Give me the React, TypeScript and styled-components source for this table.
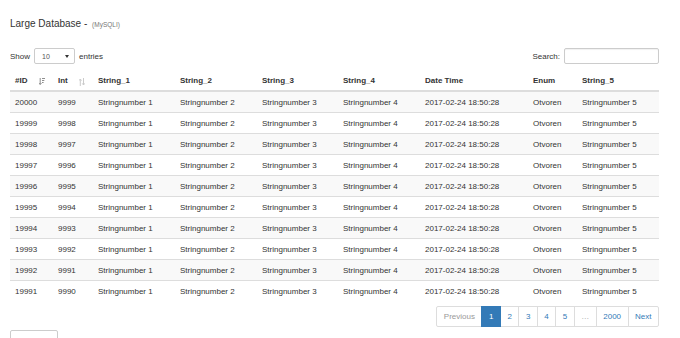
import styled, { createGlobalStyle } from "styled-components";

const GlobalStyle = createGlobalStyle`
  body {
    margin: 0;
    background: #fff;
    font-family: "Liberation Sans", Arial, sans-serif;
    font-size: 8px;
    color: #333;
  }
`;

const Page = styled.div`
  width: 649px;
  padding: 17px 0 0 10px;
  overflow: hidden;
  height: 321px;
`;

const Title = styled.h3`
  margin: 0;
  font-size: 10px;
  font-weight: normal;
  line-height: 14px;
  color: #333;
`;

const Sub = styled.small`
  font-size: 6.5px;
  color: #777;
  margin-left: 2px;
`;

const Controls = styled.div`
  display: flex;
  justify-content: space-between;
  align-items: center;
  margin-top: 16px;
  height: 16px;
`;

const Field = styled.label`
  display: flex;
  align-items: center;
  gap: 4px;
  color: #333;
`;

const SelectBox = styled.div`
  width: 41px;
  height: 16px;
  box-sizing: border-box;
  border: 1px solid #ccc;
  border-radius: 2px;
  display: flex;
  align-items: center;
  justify-content: space-between;
  padding: 0 5px 0 7px;
  font-size: 7px;
  color: #555;
`;

const Caret = styled.span`
  width: 0;
  height: 0;
  border-left: 2px solid transparent;
  border-right: 2px solid transparent;
  border-top: 3px solid #333;
`;

const SearchInput = styled.div`
  width: 95px;
  height: 16px;
  box-sizing: border-box;
  border: 1px solid #ccc;
  border-radius: 2px;
  box-shadow: inset 0 1px 1px rgba(0, 0, 0, 0.06);
`;

const Table = styled.table`
  width: 649px;
  table-layout: fixed;
  border-collapse: collapse;
  margin-top: 7px;
`;

const Th = styled.th`
  text-align: left;
  font-weight: bold;
  padding: 4px 5px;
  line-height: 11px;
  border-bottom: 2px solid #ddd;
  position: relative;
  white-space: nowrap;
`;

const Row = styled.tr<{ $striped: boolean }>`
  background: ${(p) => (p.$striped ? "#f9f9f9" : "#fff")};
`;

const Td = styled.td`
  padding: 5px 5px 4px;
  line-height: 11px;
  border-top: 1px solid #ddd;
  white-space: nowrap;
  color: #333;
`;

const SortIcon = styled.svg<{ $faded?: boolean }>`
  position: absolute;
  right: 8px;
  top: 7px;
  width: 6px;
  height: 8px;
  opacity: ${(p) => (p.$faded ? 0.25 : 0.55)};
`;

const Pager = styled.ul`
  list-style: none;
  margin: 5px 0 0;
  padding: 0;
  display: flex;
  justify-content: flex-end;
`;

const PageItem = styled.li<{ $active?: boolean; $disabled?: boolean }>`
  padding: 4px 6.5px;
  line-height: 11px;
  border: 1px solid ${(p) => (p.$active ? "#337ab7" : "#ddd")};
  margin-left: -1px;
  background: ${(p) => (p.$active ? "#337ab7" : "#fff")};
  color: ${(p) => (p.$active ? "#fff" : p.$disabled ? "#999" : "#337ab7")};
  position: relative;
  z-index: ${(p) => (p.$active ? 2 : 1)};

  &:first-child {
    border-radius: 2px 0 0 2px;
    margin-left: 0;
  }
  &:last-child {
    border-radius: 0 2px 2px 0;
  }
`;

const Button = styled.button`
  margin-top: 3px;
  width: 48px;
  height: 20px;
  border: 1px solid #ccc;
  border-radius: 2px;
  background: #fff;
  font-family: "Liberation Sans", Arial, sans-serif;
  font-size: 8px;
  color: #333;
  padding: 0;
`;

const widths = [43, 40, 82, 82, 81, 82, 108, 49, 82];
const headers = [
  "#ID",
  "Int",
  "String_1",
  "String_2",
  "String_3",
  "String_4",
  "Date Time",
  "Enum",
  "String_5",
];

const rows = Array.from({ length: 10 }, (_, i) => [
  String(20000 - i),
  String(9999 - i),
  "Stringnumber 1",
  "Stringnumber 2",
  "Stringnumber 3",
  "Stringnumber 4",
  "2017-02-24 18:50:28",
  "Otvoren",
  "Stringnumber 5",
]);

const pages = ["Previous", "1", "2", "3", "4", "5", "…", "2000", "Next"];

function SortDesc() {
  return (
    <SortIcon viewBox="0 0 6 8">
      <path d="M1.2 0v6.2M0 5l1.2 1.6L2.4 5" stroke="#333" strokeWidth="1" fill="none" />
      <path d="M3 0.5h3M3 2.5h2.3M3 4.5h1.6" stroke="#333" strokeWidth="1" />
    </SortIcon>
  );
}

function SortBoth() {
  return (
    <SortIcon viewBox="0 0 6 8" $faded>
      <path d="M1.3 8V1.2M0.1 2.6L1.3 1l1.2 1.6" stroke="#333" strokeWidth="1" fill="none" />
      <path d="M4.5 0v6.8M3.3 5.4l1.2 1.6 1.2-1.6" stroke="#333" strokeWidth="1" fill="none" />
    </SortIcon>
  );
}

export default function App() {
  return (
    <Page>
      <GlobalStyle />
      <Title>
        Large Database - <Sub>(MySQLI)</Sub>
      </Title>
      <Controls>
        <Field>
          Show
          <SelectBox>
            10
            <Caret />
          </SelectBox>
          entries
        </Field>
        <Field>
          Search:
          <SearchInput />
        </Field>
      </Controls>
      <Table>
        <colgroup>
          {widths.map((w, i) => (
            <col key={i} style={{ width: w }} />
          ))}
        </colgroup>
        <thead>
          <tr>
            {headers.map((h, i) => (
              <Th key={h}>
                {h}
                {i === 0 && <SortDesc />}
                {i === 1 && <SortBoth />}
              </Th>
            ))}
          </tr>
        </thead>
        <tbody>
          {rows.map((r, i) => (
            <Row key={r[0]} $striped={i % 2 === 0}>
              {r.map((c, j) => (
                <Td key={j}>{c}</Td>
              ))}
            </Row>
          ))}
        </tbody>
      </Table>
      <Pager>
        {pages.map((p) => (
          <PageItem
            key={p}
            $active={p === "1"}
            $disabled={p === "Previous" || p === "…"}
          >
            {p}
          </PageItem>
        ))}
      </Pager>
      <Button>Nieuw</Button>
    </Page>
  );
}
